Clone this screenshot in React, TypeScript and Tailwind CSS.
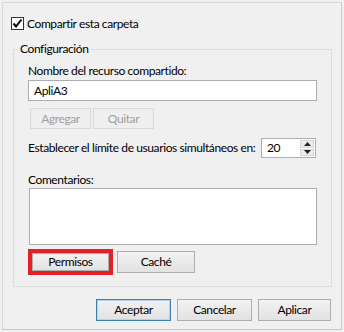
import React from 'react';

const font = { fontFamily: '"Segoe UI", Lato, "Liberation Sans", sans-serif' };

const Btn: React.FC<{ label: string; w: string; h?: string; disabled?: boolean; primary?: boolean }> = ({ label, w, h = 'h-[22px]', disabled, primary }) => (
  <button
    className={
      disabled
        ? `${w} h-[21px] border border-[#d9d9d9] bg-[#efefef] text-[#a0a0a0] text-[12px] leading-none tracking-[-0.4px]`
        : primary
        ? `${w} ${h} border border-[#3c7fb1] bg-gradient-to-b from-[#f2f2f2] to-[#e2e2e2] text-black text-[12px] leading-none tracking-[-0.4px] shadow-[inset_0_0_0_1px_#b4d3ee]`
        : `${w} ${h} border border-[#adadad] bg-gradient-to-b from-[#f2f2f2] to-[#e2e2e2] text-black text-[12px] leading-none tracking-[-0.4px]`
    }
  >
    {label}
  </button>
);

export default function App() {
  return (
    <div className="w-[344px] h-[332px] bg-[#f0f0f0] p-[2px] text-[12px] tracking-[-0.4px] text-black" style={font}>
      <div className="h-full border border-[#d9d9d9] border-r-[#c8c8c8] border-b-[#c8c8c8]">
        <div className="pl-[8px] pt-[13px] flex items-center gap-[3px] h-[28px] whitespace-nowrap">
          <span className="w-[13px] h-[13px] border border-[#333] bg-white flex items-center justify-center">
            <svg width="11" height="11" viewBox="0 0 11 11">
              <path d="M1.5 5.5 L4 8.5 L9.5 1.5" stroke="#000" strokeWidth="2" fill="none" />
            </svg>
          </span>
          <span>Compartir esta carpeta</span>
        </div>

        <fieldset className="ml-[10px] mt-[10px] w-[319px] h-[246px] border border-[#dcdcdc] pl-[14px] pr-[13px]">
          <legend className="ml-[-11px] px-[3px] leading-[16px]">Configuración</legend>
          <div className="mt-[6px] leading-[16px]">Nombre del recurso compartido:</div>
          <div className="mt-[1px] h-[21px] w-[289px] border border-[#abadb3] bg-white pl-[5px] flex items-center">ApliA3</div>
          <div className="mt-[7px] ml-[2px] flex gap-[2px]">
            <Btn label="Agregar" w="w-[61px]" disabled />
            <Btn label="Quitar" w="w-[61px]" disabled />
          </div>
          <div className="mt-[9px] flex items-center h-[20px]">
            <span className="flex-1 whitespace-nowrap">Establecer el límite de usuarios simultáneos en:</span>
            <div className="w-[55px] h-[20px] border border-[#abadb3] bg-white flex mr-[2px]">
              <span className="flex-1 pl-[5px] flex items-center">20</span>
              <div className="w-[15px] flex flex-col gap-[1px] py-[1px] pr-[1px]">
                <span className="flex-1 flex items-center justify-center bg-[#ececec] border border-[#d6d6d6]">
                  <svg width="7" height="4" viewBox="0 0 7 4"><path d="M0 4 L3.5 0 L7 4 Z" fill="#222" /></svg>
                </span>
                <span className="flex-1 flex items-center justify-center bg-[#ececec] border border-[#d6d6d6]">
                  <svg width="7" height="4" viewBox="0 0 7 4"><path d="M0 0 L3.5 4 L7 0 Z" fill="#222" /></svg>
                </span>
              </div>
            </div>
          </div>
          <div className="mt-[14px] leading-[16px]">Comentarios:</div>
          <div className="ml-[1px] h-[57px] w-[288px] border border-[#abadb3] bg-white"></div>
          <div className="mt-[4px] flex items-center gap-[4px]">
            <div className="border-[4px] border-[#e3202a]">
              <Btn label="Permisos" w="w-[77px]" h="h-[18px]" />
            </div>
            <Btn label="Caché" w="w-[78px]" />
          </div>
        </fieldset>

        <div className="mt-[12px] flex justify-end gap-[6px] pr-[10px]">
          <Btn label="Aceptar" w="w-[75px]" primary />
          <Btn label="Cancelar" w="w-[75px]" />
          <Btn label="Aplicar" w="w-[73px]" />
        </div>
      </div>
    </div>
  );
}
